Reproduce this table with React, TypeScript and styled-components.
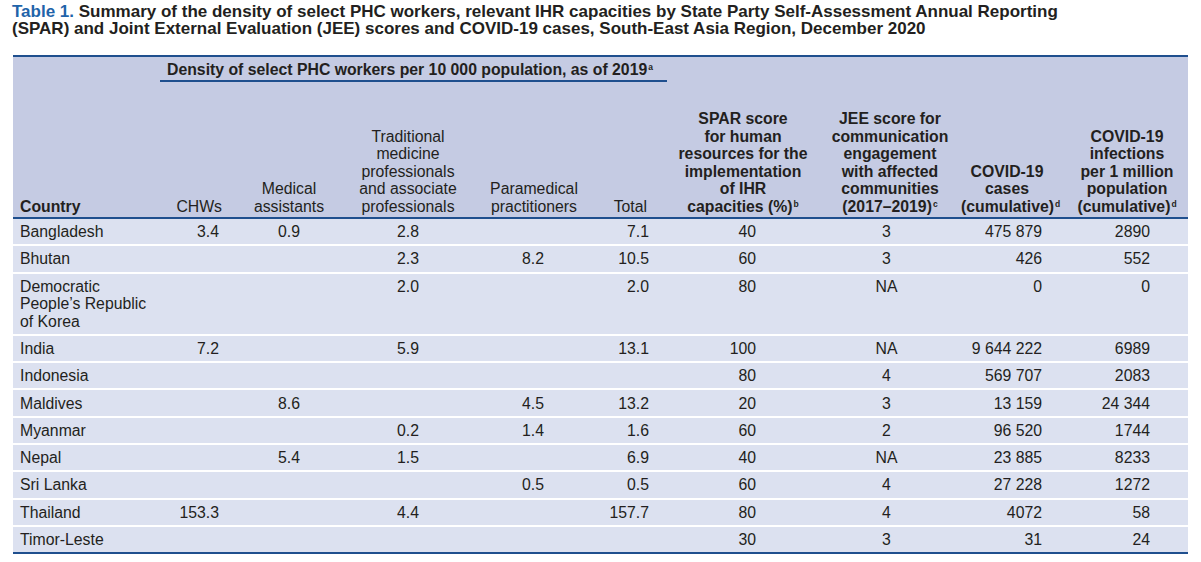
import styled, { createGlobalStyle } from 'styled-components';

const GlobalStyle = createGlobalStyle`
  body {
    margin: 0;
    background: #fff;
    font-family: "Liberation Sans", Arial, sans-serif;
    color: #231f20;
  }
`

const Page = styled.div`
  padding: 3px 13px 0 13px;
  width: 1175px;
`

const Title = styled.h1`
  margin: 0 0 18px -1px;
  font-size: 17px;
  line-height: 17px;
  font-weight: bold;
  color: #231f20;
  white-space: nowrap;

  .label {
    color: #1f64aa;
  }
`

const Table = styled.table`
  width: 1175px;
  table-layout: fixed;
  border-collapse: collapse;
  font-size: 15.8px;
  line-height: 17.5px;
  border-top: 2px solid #1f4f8e;
  border-bottom: 2px solid #1f4f8e;
`

const Head = styled.thead`
  background: #c5cbe3;
`

const GroupRow = styled.tr`
  height: 25px;
`

const GroupCell = styled.th`
  text-align: left;
  font-weight: bold;
  padding: 2px 0 0 7px;
  border-bottom: 2px solid #1f4f8e;
  white-space: nowrap;
`

const EmptyCell = styled.th`
  padding: 0;
`

const HeadRow = styled.tr`
  border-bottom: 2px solid #1f4f8e;
`

const Th = styled.th<{ $align: string; $pl: number; $pr: number; $bold?: boolean }>`
  vertical-align: bottom;
  text-align: ${p => p.$align};
  padding: 0 ${p => p.$pr}px 2px ${p => p.$pl}px;
  height: 137px;
  box-sizing: border-box;
  font-weight: ${p => (p.$bold ? 'bold' : 'normal')};
  white-space: nowrap;
`

const Line = styled.div``

const Sup = styled.span`
  font-size: 8.5px;
  position: relative;
  top: -5px;
  line-height: 0;
  margin-left: 1px;
`

const Body = styled.tbody`
  background: #dce1f0;
`

const Row = styled.tr`
  border-top: 2px solid #fff;

  &:first-child {
    border-top: none;
  }
`

const Td = styled.td<{ $align: string; $pl: number; $pr: number }>`
  vertical-align: top;
  text-align: ${p => p.$align};
  padding: 4.2px ${p => p.$pr}px 3.6px ${p => p.$pl}px;
  white-space: nowrap;
`

type Col = { width: number; head: { align: string; pl: number; pr: number }; cell: { align: string; pl: number; pr: number } }

const columns: Col[] = [
  { width: 147, head: { align: 'left', pl: 7, pr: 0 }, cell: { align: 'left', pl: 7, pr: 0 } },
  { width: 70, head: { align: 'right', pl: 0, pr: 8 }, cell: { align: 'right', pl: 0, pr: 11 } },
  { width: 118, head: { align: 'center', pl: 0, pr: 0 }, cell: { align: 'right', pl: 0, pr: 48 } },
  { width: 120, head: { align: 'center', pl: 0, pr: 0 }, cell: { align: 'right', pl: 0, pr: 49 } },
  { width: 132, head: { align: 'center', pl: 0, pr: 0 }, cell: { align: 'right', pl: 0, pr: 56 } },
  { width: 67, head: { align: 'right', pl: 0, pr: 20 }, cell: { align: 'right', pl: 0, pr: 18 } },
  { width: 152, head: { align: 'center', pl: 0, pr: 0 }, cell: { align: 'right', pl: 0, pr: 63 } },
  { width: 142, head: { align: 'center', pl: 0, pr: 0 }, cell: { align: 'center', pl: 0, pr: 7 } },
  { width: 92, head: { align: 'center', pl: 0, pr: 0 }, cell: { align: 'right', pl: 0, pr: 11 } },
  { width: 135, head: { align: 'center', pl: 13, pr: 0 }, cell: { align: 'right', pl: 0, pr: 38 } },
]

const headers: { lines: string[]; sup?: string; bold?: boolean }[] = [
  { lines: ['Country'], bold: true },
  { lines: ['CHWs'] },
  { lines: ['Medical', 'assistants'] },
  { lines: ['Traditional', 'medicine', 'professionals', 'and associate', 'professionals'] },
  { lines: ['Paramedical', 'practitioners'] },
  { lines: ['Total'] },
  { lines: ['SPAR score', 'for human', 'resources for the', 'implementation', 'of IHR', 'capacities (%)'], sup: 'b', bold: true },
  { lines: ['JEE score for', 'communication', 'engagement', 'with affected', 'communities', '(2017–2019)'], sup: 'c', bold: true },
  { lines: ['COVID-19', 'cases', '(cumulative)'], sup: 'd', bold: true },
  { lines: ['COVID-19', 'infections', 'per 1 million', 'population', '(cumulative)'], sup: 'd', bold: true },
]

const rows: string[][] = [
  ['Bangladesh', '3.4', '0.9', '2.8', '', '7.1', '40', '3', '475 879', '2890'],
  ['Bhutan', '', '', '2.3', '8.2', '10.5', '60', '3', '426', '552'],
  ['Democratic\nPeople’s Republic\nof Korea', '', '', '2.0', '', '2.0', '80', 'NA', '0', '0'],
  ['India', '7.2', '', '5.9', '', '13.1', '100', 'NA', '9 644 222', '6989'],
  ['Indonesia', '', '', '', '', '', '80', '4', '569 707', '2083'],
  ['Maldives', '', '8.6', '', '4.5', '13.2', '20', '3', '13 159', '24 344'],
  ['Myanmar', '', '', '0.2', '1.4', '1.6', '60', '2', '96 520', '1744'],
  ['Nepal', '', '5.4', '1.5', '', '6.9', '40', 'NA', '23 885', '8233'],
  ['Sri Lanka', '', '', '', '0.5', '0.5', '60', '4', '27 228', '1272'],
  ['Thailand', '153.3', '', '4.4', '', '157.7', '80', '4', '4072', '58'],
  ['Timor-Leste', '', '', '', '', '', '30', '3', '31', '24'],
]

export default function App() {
  return (
    <Page>
      <GlobalStyle />
      <Title>
        <span className="label">Table 1.</span> Summary of the density of select PHC workers, relevant IHR capacities by State Party Self-Assessment Annual Reporting
        <br />
        (SPAR) and Joint External Evaluation (JEE) scores and COVID-19 cases, South-East Asia Region, December 2020
      </Title>
      <Table>
        <colgroup>
          {columns.map((c, i) => <col key={i} style={{ width: c.width }} />)}
        </colgroup>
        <Head>
          <GroupRow>
            <EmptyCell />
            <GroupCell colSpan={5}>
              Density of select PHC workers per 10 000 population, as of 2019<Sup>a</Sup>
            </GroupCell>
            <EmptyCell colSpan={4} />
          </GroupRow>
          <HeadRow>
            {headers.map((h, i) => (
              <Th key={i} $align={columns[i].head.align} $pl={columns[i].head.pl} $pr={columns[i].head.pr} $bold={h.bold}>
                {h.lines.map((l, j) => (
                  <Line key={j}>
                    {l}
                    {h.sup && j === h.lines.length - 1 && <Sup>{h.sup}</Sup>}
                  </Line>
                ))}
              </Th>
            ))}
          </HeadRow>
        </Head>
        <Body>
          {rows.map((r, i) => (
            <Row key={i}>
              {r.map((v, j) => (
                <Td key={j} $align={columns[j].cell.align} $pl={columns[j].cell.pl} $pr={columns[j].cell.pr}>
                  {v.split('\n').map((l, k) => <Line key={k}>{l}</Line>)}
                </Td>
              ))}
            </Row>
          ))}
        </Body>
      </Table>
    </Page>
  );
}
